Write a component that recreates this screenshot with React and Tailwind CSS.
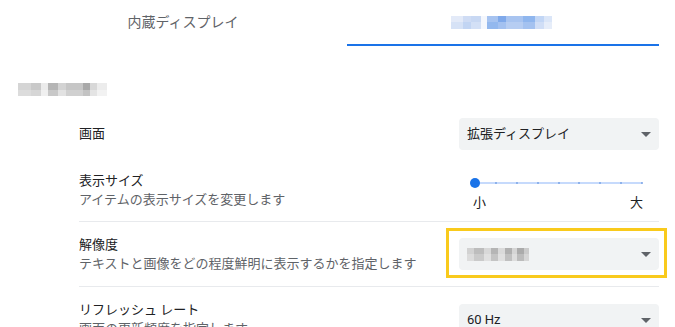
import React from "react";

const tabBlurTop = [
  ["w-[12px]", "bg-[#e3eaf8]"],
  ["w-[8px]", "bg-[#cfdcf4]"],
  ["w-[10px]", "bg-[#c8d8f3]"],
  ["w-[6px]", "bg-[#f4f7fd]"],
  ["w-[11px]", "bg-[#a6c3f0]"],
  ["w-[8px]", "bg-[#7fa9ea]"],
  ["w-[17px]", "bg-[#a8c4f0]"],
  ["w-[12px]", "bg-[#8fb6ee]"],
  ["w-[9px]", "bg-[#c2d6f5]"],
  ["w-[8px]", "bg-[#dbe6f8]"],
];
const tabBlurBottom = [
  ["w-[12px]", "bg-[#d6e2f6]"],
  ["w-[8px]", "bg-[#c2d5f3]"],
  ["w-[10px]", "bg-[#d3e0f6]"],
  ["w-[6px]", "bg-[#f4f7fd]"],
  ["w-[11px]", "bg-[#93b8ee]"],
  ["w-[8px]", "bg-[#a3c1f0]"],
  ["w-[17px]", "bg-[#b6cdf2]"],
  ["w-[12px]", "bg-[#a4c2f0]"],
  ["w-[9px]", "bg-[#d0def6]"],
  ["w-[8px]", "bg-[#e6edf9]"],
];

const headTop = [
  ["w-[13px]", "bg-[#d5d5d5]"],
  ["w-[10px]", "bg-[#c9c9c9]"],
  ["w-[7px]", "bg-[#ebebeb]"],
  ["w-[10px]", "bg-[#b5b5b5]"],
  ["w-[8px]", "bg-[#d3d3d3]"],
  ["w-[17px]", "bg-[#c6c6c6]"],
  ["w-[7px]", "bg-[#a9a9a9]"],
  ["w-[7px]", "bg-[#d8d8d8]"],
  ["w-[10px]", "bg-[#ececec]"],
];
const headBottom = [
  ["w-[13px]", "bg-[#dcdcdc]"],
  ["w-[10px]", "bg-[#d6d6d6]"],
  ["w-[7px]", "bg-[#f0f0f0]"],
  ["w-[10px]", "bg-[#c8c8c8]"],
  ["w-[8px]", "bg-[#e2e2e2]"],
  ["w-[17px]", "bg-[#d0d0d0]"],
  ["w-[7px]", "bg-[#c3c3c3]"],
  ["w-[7px]", "bg-[#e4e4e4]"],
  ["w-[10px]", "bg-[#f2f2f2]"],
];

const resTop = [
  ["w-[7px]", "bg-[#d2d2d2]"],
  ["w-[10px]", "bg-[#bdbdbd]"],
  ["w-[7px]", "bg-[#d8d8d8]"],
  ["w-[7px]", "bg-[#b5b5b5]"],
  ["w-[7px]", "bg-[#dadada]"],
  ["w-[7px]", "bg-[#b0b0b0]"],
  ["w-[5px]", "bg-[#d5d5d5]"],
  ["w-[7px]", "bg-[#ababab]"],
  ["w-[5px]", "bg-[#cbcbcb]"],
];
const resBottom = [
  ["w-[7px]", "bg-[#dcdcdc]"],
  ["w-[10px]", "bg-[#cacaca]"],
  ["w-[7px]", "bg-[#e0e0e0]"],
  ["w-[7px]", "bg-[#c4c4c4]"],
  ["w-[7px]", "bg-[#e0e0e0]"],
  ["w-[7px]", "bg-[#c0c0c0]"],
  ["w-[5px]", "bg-[#dddddd]"],
  ["w-[7px]", "bg-[#bcbcbc]"],
  ["w-[5px]", "bg-[#d6d6d6]"],
];

function Pixels({ top, bottom, rowH }) {
  return (
    <div className="flex flex-col blur-[0.6px]">
      <div className="flex">
        {top.map(([w, c], i) => (
          <div key={i} className={`${w} ${c} ${rowH}`} />
        ))}
      </div>
      <div className="flex">
        {bottom.map(([w, c], i) => (
          <div key={i} className={`${w} ${c} ${rowH}`} />
        ))}
      </div>
    </div>
  );
}

function Arrow() {
  return (
    <svg width="10" height="5" viewBox="0 0 10 5">
      <path d="M0 0h10L5 5z" fill="#5f6368" />
    </svg>
  );
}

function Dropdown({ children }) {
  return (
    <div className="w-[200px] h-[32px] rounded-[4px] bg-[#f1f3f4] pl-[8px] pr-[8px] flex items-center justify-between text-[13px] text-[#202124]">
      <div className="flex items-center">{children}</div>
      <Arrow />
    </div>
  );
}

function Title({ title, sub }) {
  return (
    <div className="flex flex-col">
      <div className="text-[13px] leading-[20px] text-[#202124]">{title}</div>
      {sub && (
        <div className="text-[13px] leading-[18px] text-[#5f6368]">{sub}</div>
      )}
    </div>
  );
}

export default function App() {
  const ticks = [0, 1, 2, 3, 4, 5, 6, 7, 8];
  return (
    <div className="w-[675px] h-[327px] overflow-hidden bg-white font-['Roboto','Noto_Sans_CJK_JP',sans-serif]">
      {/* Tabs */}
      <div className="flex h-[46px] pl-[27px] gap-[8px]">
        <div className="w-[312px] flex items-center justify-center pb-[2px] text-[14px] text-[#5f6368]">
          内蔵ディスプレイ
        </div>
        <div className="w-[312px] flex items-center justify-center border-b-2 border-[#1a73e8]">
          <div className="ml-[-4px]">
            <Pixels top={tabBlurTop} bottom={tabBlurBottom} rowH="h-[6.5px]" />
          </div>
        </div>
      </div>

      {/* Section header */}
      <div className="mt-[37px] pl-[18px] h-[13px]">
        <Pixels top={headTop} bottom={headBottom} rowH="h-[6.5px]" />
      </div>

      {/* Rows */}
      <div className="mt-[14px] pl-[79px] pr-[16px] flex flex-col">
        {/* 画面 */}
        <div className="h-[48px] flex items-center justify-between">
          <Title title="画面" />
          <Dropdown>拡張ディスプレイ</Dropdown>
        </div>

        {/* 表示サイズ */}
        <div className="h-[63px] flex items-center justify-between">
          <Title title="表示サイズ" sub="アイテムの表示サイズを変更します" />
          <div className="w-[200px] self-start mt-[20px] flex flex-col">
            <div className="relative h-[10px]">
              <div className="absolute left-[16px] right-[17px] top-[4px] h-[2px] bg-[#c6dafc]" />
              <div className="absolute left-[15px] right-[16px] top-[4px] h-[2px] flex justify-between">
                {ticks.map((t) => (
                  <div key={t} className="w-[2px] h-[2px] rounded-full bg-[#7ba4e6]" />
                ))}
              </div>
              <div className="absolute left-[11px] top-0 w-[10px] h-[10px] rounded-full bg-[#1a73e8]" />
            </div>
            <div className="mt-[8px] flex justify-between pl-[14px] pr-[16px] text-[13px] leading-[14px] text-[#202124]">
              <span>小</span>
              <span>大</span>
            </div>
          </div>
        </div>

        <div className="h-px bg-[#e8eaed]" />

        {/* 解像度 */}
        <div className="h-[64px] flex items-center justify-between">
          <Title
            title="解像度"
            sub="テキストと画像をどの程度鮮明に表示するかを指定します"
          />
          <div className="relative">
            <div className="absolute left-[-13px] right-[-8px] top-[-10px] bottom-[-8px] border-[3px] border-[#f9ca1c]" />
            <Dropdown>
              <Pixels top={resTop} bottom={resBottom} rowH="h-[6.5px]" />
            </Dropdown>
          </div>
        </div>

        <div className="h-px bg-[#e8eaed]" />

        {/* リフレッシュ レート */}
        <div className="h-[64px] flex items-center justify-between">
          <Title title="リフレッシュ レート" sub="画面の更新頻度を指定します" />
          <div className="self-start mt-[17px]">
            <Dropdown>60 Hz</Dropdown>
          </div>
        </div>
      </div>
    </div>
  );
}
